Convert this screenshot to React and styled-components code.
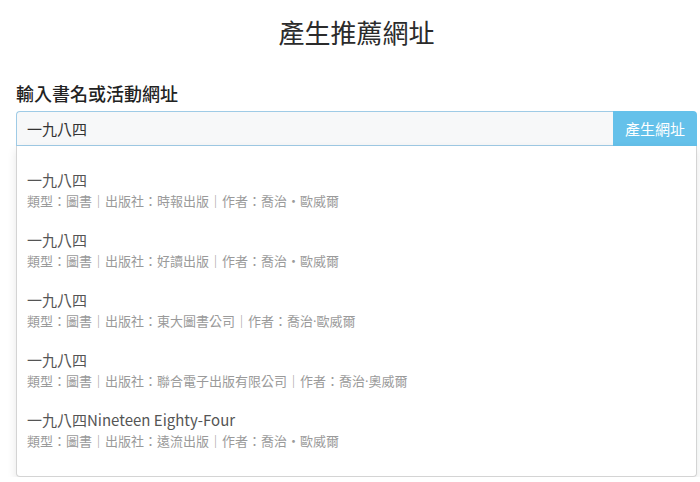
import React from 'react';
import styled, { createGlobalStyle } from 'styled-components';

const GlobalStyle = createGlobalStyle`
  body {
    margin: 0;
    background: #fff;
    font-family: 'Noto Sans CJK TC', 'Noto Sans', sans-serif;
    color: #333;
  }
`;

const Page = styled.div`
  width: 681px;
  margin-left: 16px;
  padding-top: 14px;
`;

const Title = styled.h1`
  margin: 0;
  text-align: center;
  font-size: 26px;
  line-height: 36px;
  font-weight: 400;
  color: #2b2b2b;
`;

const Label = styled.label`
  display: block;
  margin-top: 30px;
  font-size: 18px;
  line-height: 26px;
  font-weight: 500;
  color: #222;
`;

const Autocomplete = styled.div`
  margin-top: 5px;
  display: flex;
  flex-direction: column;
`;

const SearchGroup = styled.div`
  display: flex;
  height: 35px;
`;

const SearchInput = styled.div`
  flex: 1;
  display: flex;
  align-items: center;
  padding: 0 10px;
  background: #f7f8f9;
  border: 1px solid #9fcbe6;
  border-right: none;
  border-radius: 4px 0 0 0;
  font-size: 15px;
  color: #333;
`;

const SubmitButton = styled.button`
  width: 84px;
  border: none;
  border-radius: 0 4px 0 0;
  background: #65c1ea;
  color: #fff;
  font-family: inherit;
  font-size: 15px;
  padding: 0;
`;

const Dropdown = styled.div`
  padding: 14px 0 16px;
  background: #fff;
  border: 1px solid #d4d4d4;
  border-top: none;
  border-radius: 0 0 4px 4px;
  box-shadow: 0 4px 10px rgba(0, 0, 0, 0.1);
`;

const Item = styled.div`
  padding: 9px 10px;
`;

const ItemTitle = styled.div`
  font-size: 15px;
  line-height: 22px;
  color: #555;
`;

const ItemMeta = styled.div`
  font-family: 'Noto Sans', 'Noto Sans CJK TC', sans-serif;
  font-size: 13px;
  line-height: 20px;
  color: #9a9a9a;
`;

const results = [
  { title: '一九八四', meta: '類型：圖書｜出版社：時報出版｜作者：喬治・歐威爾' },
  { title: '一九八四', meta: '類型：圖書｜出版社：好讀出版｜作者：喬治・歐威爾' },
  { title: '一九八四', meta: '類型：圖書｜出版社：東大圖書公司｜作者：喬治·歐威爾' },
  { title: '一九八四', meta: '類型：圖書｜出版社：聯合電子出版有限公司｜作者：喬治·奧威爾' },
  { title: '一九八四Nineteen Eighty-Four', meta: '類型：圖書｜出版社：遠流出版｜作者：喬治・歐威爾' },
];

export default function App() {
  return (
    <>
      <GlobalStyle />
      <Page>
        <Title>產生推薦網址</Title>
        <Label>輸入書名或活動網址</Label>
        <Autocomplete>
          <SearchGroup>
            <SearchInput>一九八四</SearchInput>
            <SubmitButton>產生網址</SubmitButton>
          </SearchGroup>
          <Dropdown>
            {results.map((r, i) => (
              <Item key={i}>
                <ItemTitle>{r.title}</ItemTitle>
                <ItemMeta>{r.meta}</ItemMeta>
              </Item>
            ))}
          </Dropdown>
        </Autocomplete>
      </Page>
    </>
  );
}
